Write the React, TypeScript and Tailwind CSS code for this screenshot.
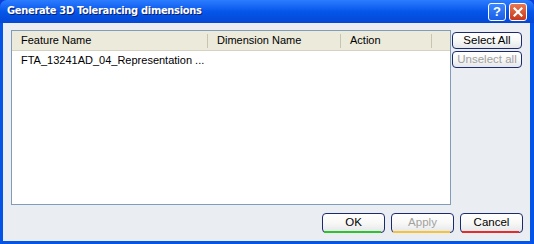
import React from 'react';

const font = { fontFamily: '"Liberation Sans", Arial, sans-serif' };
const titleFont = { fontFamily: '"DejaVu Sans Condensed", "DejaVu Sans", sans-serif' };

function XpButton({
  label,
  disabled,
  accent,
  className,
}: {
  label: string;
  disabled?: boolean;
  accent?: string;
  className?: string;
}) {
  return (
    <button
      className={`relative flex items-center justify-center rounded-[4px] border border-[#1c2a6e] bg-gradient-to-b from-white via-[#f8f8f6] to-[#e4e6ea] text-[11.5px] leading-none ${
        disabled ? 'text-[#a1a1a1]' : 'text-black'
      } ${className ?? ''}`}
    >
      <span>{label}</span>
      {accent && <span className={`absolute left-[1px] right-[3px] bottom-[-1px] h-[2px] ${accent}`} />}
    </button>
  );
}

export default function App() {
  return (
    <div className="w-[534px] h-[244px] bg-[#0a3ddc]" style={font}>
      <div className="flex flex-col w-full h-full rounded-t-[7px] bg-[#0554e8] pb-[3px] pl-[3px] pr-[4px]">
        {/* Title bar */}
        <div className="h-[23px] -ml-[3px] -mr-[4px] flex items-center justify-between rounded-t-[7px] bg-gradient-to-b from-[#2c7cff] via-[#0556ea] to-[#0447d4] px-[7px]">
          <span className="text-white font-bold text-[11px] tracking-[-0.3px] [text-shadow:1px_1px_0_#0a1e6e]" style={titleFont}>
            Generate 3D Tolerancing dimensions
          </span>
          <div className="flex gap-[3px] mt-[1px]">
            <div className="w-[18px] h-[18px] rounded-[3px] border border-white bg-gradient-to-b from-[#3c86ff] to-[#1a5ee6] flex items-center justify-center text-white font-bold text-[13px]">
              ?
            </div>
            <div className="w-[18px] h-[18px] rounded-[3px] border border-white bg-gradient-to-b from-[#e9774f] to-[#c6381a] flex items-center justify-center">
              <svg width="10" height="10" viewBox="0 0 10 10">
                <path d="M1.5 1.5 L8.5 8.5 M8.5 1.5 L1.5 8.5" stroke="white" strokeWidth="2.2" strokeLinecap="square" />
              </svg>
            </div>
          </div>
        </div>

        {/* Body */}
        <div className="flex-1 bg-[#eaeef2] flex flex-col px-[8px] pt-[7px]">
          <div className="flex gap-[1px]">
            <div className="w-[440px] h-[175px] border border-[#7f9db9] bg-white flex flex-col">
              <div className="h-[20px] flex items-center bg-[#ebeadb] border-b border-[#d6d2c2] text-[11px] text-black">
                <div className="w-[196px] pl-[9px] border-r border-[#c7c5b2] h-[14px] flex items-center">Feature Name</div>
                <div className="w-[133px] pl-[9px] border-r border-[#c7c5b2] h-[14px] flex items-center">Dimension Name</div>
                <div className="w-[91px] pl-[9px] border-r border-[#c7c5b2] h-[14px] flex items-center">Action</div>
              </div>
              <div className="h-[18px] flex items-center pl-[9px] text-[11px] text-black">
                FTA_13241AD_04_Representation ...
              </div>
            </div>
            <div className="flex flex-col gap-[2px] pt-[2px]">
              <XpButton label="Select All" className="w-[70px] h-[17px]" />
              <XpButton label="Unselect all" disabled className="w-[70px] h-[17px]" />
            </div>
          </div>
          <div className="flex justify-end gap-[6px] mt-[8px] -mr-[1px]">
            <XpButton label="OK" accent="bg-[#2ec22e]" className="w-[63px] h-[20px]" />
            <XpButton label="Apply" disabled accent="bg-[#f5c33a]" className="w-[63px] h-[20px]" />
            <XpButton label="Cancel" accent="bg-[#e42c2c]" className="w-[63px] h-[20px]" />
          </div>
        </div>
      </div>
    </div>
  );
}
